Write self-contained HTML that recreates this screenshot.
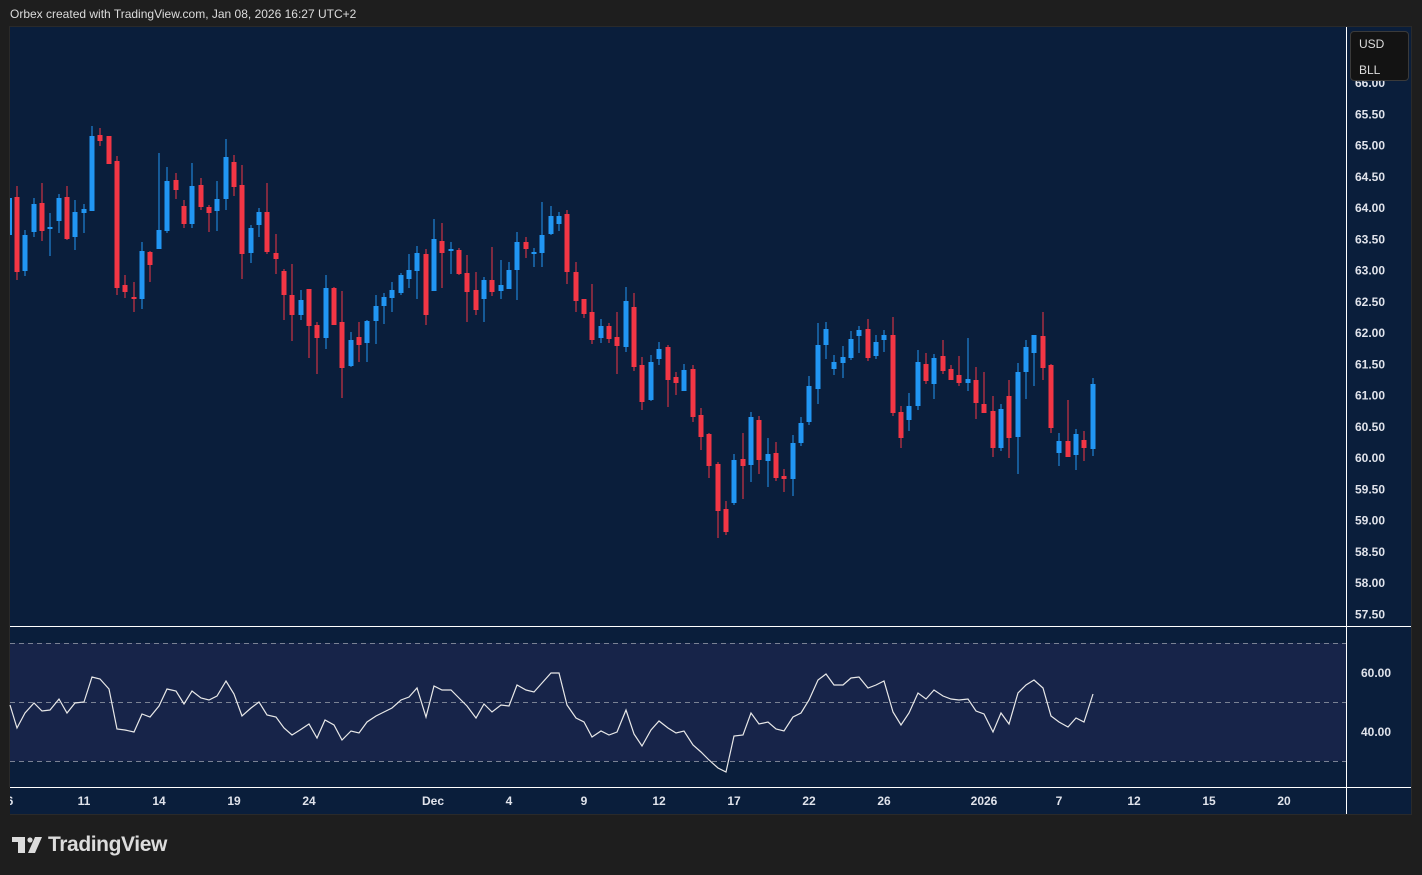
<!DOCTYPE html>
<html><head><meta charset="utf-8"><style>
html,body{margin:0;padding:0;background:#1e1e1e;width:1422px;height:875px;overflow:hidden;font-family:"Liberation Sans",sans-serif}
#hdr{position:absolute;left:10px;top:7px;font-size:12px;color:#dcdcdc}
#chart{position:absolute;left:0;top:0}
#box{position:absolute;left:1350px;top:31px;width:57px;height:48px;background:#131313;border:1px solid #3a3a3a;border-radius:4px;color:#dcdcdc;font-size:12px}
#box div{position:absolute;left:8px}
#logo{position:absolute;left:48px;top:833px;color:#dcdcdc;font-size:21px;font-weight:bold;letter-spacing:-0.4px}
</style></head><body>
<div id="hdr">Orbex created with TradingView.com, Jan 08, 2026 16:27 UTC+2</div>
<svg id="chart" width="1422" height="875" xmlns="http://www.w3.org/2000/svg">
<rect x="9" y="26" width="1403" height="789" fill="#2a2a2a"/>
<rect x="10" y="27" width="1401" height="787" fill="#0a1e3b"/>
<rect x="10" y="643" width="1336" height="118" fill="#172449"/>
<g stroke="#7a8294" stroke-dasharray="5,4" stroke-width="1">
<line x1="10" y1="643.5" x2="1346" y2="643.5"/><line x1="10" y1="702.5" x2="1346" y2="702.5"/><line x1="10" y1="761.5" x2="1346" y2="761.5"/></g>
<g stroke="#ffffff" stroke-width="1"><line x1="10" y1="626.5" x2="1411" y2="626.5"/><line x1="10" y1="787.5" x2="1411" y2="787.5"/><line x1="1346.5" y1="27" x2="1346.5" y2="814"/></g>
<g id="candles"></g>
<polyline id="rsi" fill="none" stroke="#e8e8e8" stroke-width="1.2"/>
<g id="plab" font-size="12" fill="#e0e3eb" font-weight="bold" font-family="Liberation Sans, sans-serif"></g>
<g font-size="12" fill="#e0e3eb" font-weight="bold" font-family="Liberation Sans, sans-serif" text-anchor="middle">
<text x="10" y="805">6</text><text x="84" y="805">11</text><text x="159" y="805">14</text><text x="234" y="805">19</text><text x="309" y="805">24</text><text x="433" y="805">Dec</text><text x="509" y="805">4</text><text x="584" y="805">9</text><text x="659" y="805">12</text><text x="734" y="805">17</text><text x="809" y="805">22</text><text x="884" y="805">26</text><text x="984" y="805">2026</text><text x="1059" y="805">7</text><text x="1134" y="805">12</text><text x="1209" y="805">15</text><text x="1284" y="805">20</text>
<text x="1376" y="677">60.00</text><text x="1376" y="736">40.00</text>
</g>
<rect x="0" y="787" width="10" height="30" fill="#1e1e1e"/>
<g fill="#dcdcdc"><rect x="12" y="837" width="13" height="5"/><rect x="18" y="837" width="7" height="16"/><circle cx="30" cy="840" r="2.6"/><polygon points="35,837 42,837 35,853 28,853"/></g>
</svg>
<div id="box"><div style="top:5px">USD</div><div style="top:31px">BLL</div></div>
<div id="logo">TradingView</div>
<script>
var C=[[11,198,235,198,235,1],
[17,186,280,197,272,0],[25,230,276,235,271,1],[34,198,237,204,232,1],[42,183,241,203,231,0],[50,213,256,227,228,1],[59,194,233,198,221,1],[67,186,240,197,239,0],[75,200,250,212,237,1],[84,204,233,209,213,1],[92,126,211,136,211,1],[100,128,146,135,141,0],[109,136,164,136,164,0],[117,156,295,161,288,0],[125,275,298,285,292,0],[134,282,312,297,299,0],[142,242,309,251,299,1],[150,251,282,252,265,0],[159,153,249,230,249,1],[167,167,233,181,231,1],
[176,173,199,180,190,0],[184,200,228,206,224,0],[192,163,228,186,224,1],[201,178,210,185,207,0],[209,205,232,207,213,0],[217,181,231,199,211,1],[226,139,210,157,199,1],[234,155,196,162,187,0],[242,165,279,185,254,0],[251,225,263,228,253,1],[259,208,237,212,225,1],[267,183,254,212,252,0],[276,234,274,253,259,0],[284,269,320,271,295,0],[292,264,341,295,315,0],[301,290,320,300,315,1],[309,289,358,289,326,0],[317,322,374,325,338,0],[326,275,349,288,338,1],[334,287,325,288,325,0],[342,291,398,322,368,0],[351,332,367,340,366,1],[359,322,362,337,345,0],[367,320,362,321,343,1],[376,295,344,306,321,1],[384,293,324,297,306,1],[392,282,312,290,298,1],[401,273,295,275,293,1],[409,254,288,270,279,1],[417,246,299,253,271,1],[426,249,325,254,315,0],[434,219,291,239,291,1],[442,223,288,241,253,0],
[451,242,274,249,251,1],[459,248,275,250,274,0],[467,255,322,273,292,0],[476,272,315,290,310,0],[484,277,322,280,299,1],[492,247,296,280,292,0],[501,260,299,285,291,1],[509,262,289,270,289,1],[517,232,300,242,270,1],[526,237,258,242,249,0],[534,248,267,252,254,1],[542,202,267,235,253,1],[551,206,235,216,234,1],[559,212,231,216,224,1],[567,210,284,214,272,0],[576,262,312,272,301,0],[584,299,318,299,314,0],[592,284,344,312,340,0],[601,319,343,326,338,1],[609,323,343,326,339,0],[617,312,374,337,346,0],[626,287,352,301,347,1],[634,293,371,307,367,0],[642,357,410,365,402,0],[651,355,401,362,400,1],[659,342,365,349,359,1],[668,345,407,347,380,0],[676,372,395,377,383,0],[684,364,391,370,391,1],[693,365,422,369,417,0],[701,408,450,415,437,0],[709,433,478,434,466,0],
[718,462,538,464,511,0],[726,501,535,509,532,0],[734,454,505,460,503,1],[743,433,499,459,466,0],[751,412,482,417,465,1],[759,416,474,420,460,0],[768,438,487,454,461,1],[776,442,481,453,478,0],[784,469,492,476,479,0],[793,435,496,443,479,1],[801,417,446,423,443,1],[809,376,425,386,422,1],[818,323,404,345,389,1],[826,322,359,329,345,1],[834,355,375,362,369,1],[843,346,378,357,363,1],[851,331,360,339,358,1],[859,326,353,330,336,1],[868,319,361,329,358,0],[876,335,359,342,356,1],[884,330,352,335,340,1],[893,317,416,335,413,0],[901,406,448,412,438,0],[909,393,431,406,420,1],[918,350,410,362,406,1],[926,353,384,364,381,0],[934,354,399,358,384,1],[943,340,374,356,371,0],[951,365,380,369,380,0],[959,356,386,375,383,0],[968,338,391,379,383,1],[976,367,419,380,403,0],[984,372,413,404,413,0],[993,396,457,411,448,0],[1001,404,451,409,448,1],[1009,380,458,396,438,0],[1018,363,474,372,437,1],[1026,340,399,347,372,1],[1034,338,386,335,353,1],[1043,312,380,336,368,0],[1051,364,433,365,428,0],[1059,433,466,441,453,1],[1068,400,457,441,457,0],[1076,429,470,434,455,1],[1084,431,461,440,448,0],[1093,378,456,384,449,1]];
var s='';C.forEach(function(c){var col=c[5]?'#2196f3':'#f23645';var x=c[0];var h=Math.max(2,c[4]-c[3]);var w=x==11?2:5;
s+='<rect x="'+(x-0.5)+'" y="'+c[1]+'" width="1" height="'+(c[2]-c[1])+'" fill="'+col+'"/>';
s+='<rect x="'+(x-w/2)+'" y="'+c[3]+'" width="'+w+'" height="'+h+'" fill="'+col+'"/>';});
document.getElementById('candles').innerHTML=s;
var R=[[10,705],[17,728],[25,713],[34,703],[42,711],[50,710],[59,699],[67,713],[75,703],[84,702],[92,677],[100,679],[109,689],[117,729],[125,730],[134,732],[142,714],[150,717],[159,706],[167,689],[176,691],[184,704],[192,691],[201,698],[209,700],[217,696],[226,681],[234,694],[242,716],[251,708],[259,702],[267,715],[276,717],[284,728],[292,735],[300,730],[309,724],[317,738],[325,720],[334,725],[342,740],[351,731],[359,733],[367,722],[376,716],[384,712],[392,708],[401,700],[409,697],[417,688],[426,717],[434,686],[442,690],[451,690],[459,698],[467,706],[476,718],[484,704],[492,712],[501,705],[509,706],[517,685],[526,690],[534,692],[542,683],[551,673],[559,673],[567,705],[576,718],[584,722],[592,737],[601,731],[609,735],[617,732],[626,710],[634,734],[642,746],[651,730],[659,721],[668,728],[676,733],[684,731],[693,745],[701,752],[709,760],[718,768],[726,772],[734,736],[743,735],[751,713],[759,724],[768,722],[776,729],[784,731],[793,717],[801,713],[809,700],[818,680],[826,674],[834,685],[843,685],[851,678],[859,677],[868,688],[876,685],[884,681],[893,712],[901,725],[909,713],[918,693],[926,699],[934,690],[943,696],[951,699],[959,700],[968,699],[976,711],[984,714],[993,732],[1001,713],[1009,724],[1018,693],[1026,685],[1034,680],[1043,688],[1051,716],[1059,722],[1068,727],[1076,718],[1084,722],[1093,694]];
document.getElementById('rsi').setAttribute('points',R.map(function(p){return p.join(',')}).join(' '));
var t='';for(var i=0;i<=17;i++){var v=(66-i*0.5).toFixed(2);var y=83+i*31.25;t+='<text x="1355" y="'+(y+4)+'">'+v+'</text>';}
document.getElementById('plab').innerHTML=t;
</script>
</body></html>
